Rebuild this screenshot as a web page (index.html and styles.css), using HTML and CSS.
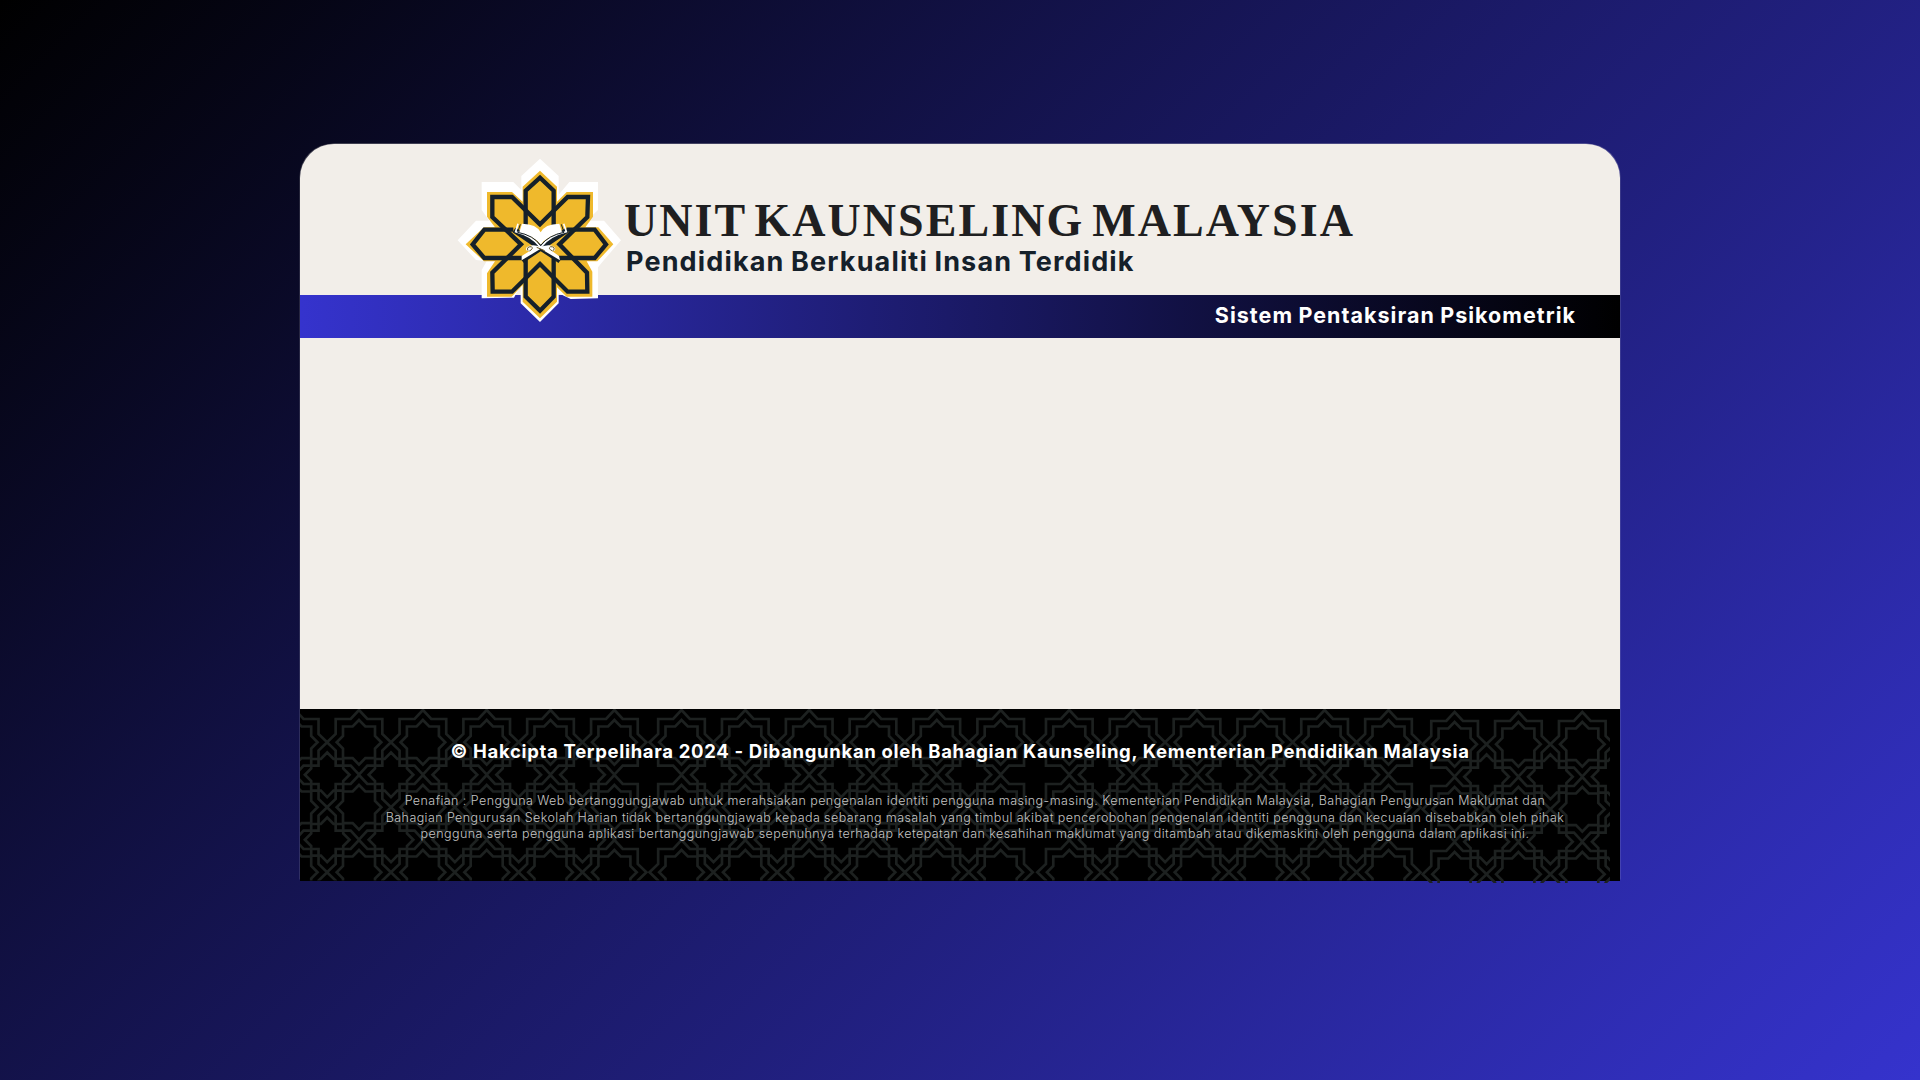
FILE: index.html
```html
<!DOCTYPE html>
<html lang="ms">
<head>
<meta charset="utf-8">
<title>Unit Kaunseling Malaysia</title>
<link rel="stylesheet" href="styles.css">
</head>
<body>
<main class="card">
  <header class="header">
    <svg class="logo" viewBox="0 0 600 540" aria-hidden="true">
      <path fill="#fff" d="M300 26 356 78V134L388 96H474V180L440 212H492L543 271 492 330 474 352V445L392 447 356 430V460L300 516 242 460V405L222 443 125 445V360L140 334 108 330 53 271 108 212H148L125 180V96H220L244 120V78Z"/>
      <path fill="#efb92c" d="M300 62 351 110V155L380 126H459V200L436 232H475L520 283 472 334H440L457 365V440H380L351 412V455L300 505 248 455V405L215 440H141V370L165 334H132L77 283 132 232H165L141 200V126H216L248 155V110Z"/>
      <path fill="#efb92c" d="M250 238H350V326H250Z"/>
      <g fill="none" stroke="#15202a" stroke-width="13">
        <path d="M257 240V122L300 83 341 122V240M257 325V440L300 482 341 440V325"/>
        <path d="M220 239H133L98 283 133 324H250M380 239H464L498 283 464 324H350"/>
        <path d="M300 223 216 141H157V201L243 283 157 368 158 425H216L300 342 383 425H442L441 368 358 283 442 201 444 141H383Z"/>
      </g>
      <path fill="none" stroke="#15202a" stroke-width="16" d="M222 240 302 294 382 240M302 294 246 332M302 294 360 332"/>
      <path fill="#fff" d="M246 221Q290 222 302 247 314 222 358 221L366 247Q322 258 302 284 282 258 238 247Z"/>
      <g fill="none" stroke="#fff" stroke-width="5">
        <path d="M234 221 227 245Q276 257 301 291M371 221 379 245Q328 257 303 291"/>
      </g>
      <path fill="none" stroke="#15202a" stroke-width="3" d="M241 223 233 247Q280 256 302 286 326 256 372 247L364 223"/>
      <path fill="#fff" d="M302 290Q274 280 260 292 254 304 268 304L245 318V331L302 296 360 331 357 318 337 304Q350 302 344 292 332 280 302 290Z"/>
      <path fill="none" stroke="#6b5620" stroke-width="3" d="M264 302Q258 290 274 290 282 296 268 303M340 302Q348 290 332 290 322 296 338 303M290 292 314 302"/>
    </svg>
    <div class="titles">
      <h1 class="title">UNIT KAUNSELING MALAYSIA</h1>
      <p class="subtitle">Pendidikan Berkualiti Insan Terdidik</p>
    </div>
  </header>
  <div class="bar">Sistem Pentaksiran Psikometrik</div>
  <section class="content"></section>
  <footer class="footer">
    <svg class="pattern" viewBox="300 709 1320 174" aria-hidden="true">
      <defs>
        <path id="inner" d="M0-67 19-47.500H48V-19L67 0 48 19V47.500H19L0 67-19 47.500H-48V19L-67 0-48-19V-47.500H-19Z"/>
        <g id="s" transform="scale(.3333)">
          <use href="#inner"/>
          <path d="M0-97 25-70H70V-25L96 0 70 25V70H25L0 97-25 70H-70V25L-96 0-70-25V-70H-25Z"/>
        </g>
        <g id="t" transform="scale(.3333)"><use href="#inner"/></g>
        <g id="scol"><use href="#s"/><use href="#s" y="65"/><use href="#s" y="130"/></g>
        <g id="tcol"><use href="#t" x="32" y="32.500"/><use href="#t" x="32" y="97.500"/></g>
        <g id="pair"><use href="#scol"/><use href="#tcol"/></g>
        <g id="group">
          <use href="#pair"/><use href="#pair" x="63.800"/><use href="#pair" x="127.700"/>
          <use href="#pair" x="191.500"/><use href="#pair" x="255.300"/><use href="#scol" x="319.200"/>
        </g>
        <clipPath id="left"><path d="M300 709H1422V880.500H300Z"/></clipPath>
        <clipPath id="right"><path d="M1421 709H1610V883H1421Z"/></clipPath>
      </defs>
      <g clip-path="url(#left)">
        <g class="lines">
          <use href="#group" x="295.200" y="742.300"/>
          <use href="#group" x="681.500" y="742.300"/>
          <use href="#group" x="1069.300" y="742.300"/>
        </g>
      </g>
      <g clip-path="url(#right)">
        <g class="lines">
          <use href="#pair" x="1454.600" y="744.300"/>
          <use href="#pair" x="1518.400" y="744.300"/>
          <use href="#pair" x="1582.300" y="744.300"/>
        </g>
      </g>
    </svg>
    <div class="legal">
      <p class="copyright">© Hakcipta Terpelihara 2024 - Dibangunkan oleh Bahagian Kaunseling, Kementerian Pendidikan Malaysia</p>
      <p class="disclaimer">
        <span class="line-one">Penafian : Pengguna Web bertanggungjawab untuk merahsiakan pengenalan identiti pengguna masing-masing. Kementerian Pendidikan Malaysia, Bahagian Pengurusan Maklumat dan</span>
        <span class="line-two">Bahagian Pengurusan Sekolah Harian tidak bertanggungjawab kepada sebarang masalah yang timbul akibat pencerobohan pengenalan identiti pengguna dan kecuaian disebabkan oleh pihak</span>
        <span class="line-three">pengguna serta pengguna aplikasi bertanggungjawab sepenuhnya terhadap ketepatan dan kesahihan maklumat yang ditambah atau dikemaskini oleh pengguna dalam aplikasi ini.</span>
      </p>
    </div>
  </footer>
</main>
</body>
</html>
```
FILE: styles.css
```css
* { box-sizing: border-box; }
body {
  margin: 0;
  height: 1080px;
  padding-top: 144px;
  overflow: hidden;
  background: linear-gradient(135deg, #000 0%, #3533cd 100%);
  font-family: Inter, "Open Sans", sans-serif;
}
h1, p { margin: 0; }
.card {
  width: 1320px;
  margin: 0 auto;
  border-radius: 34px 34px 0 0;
  background: #f2eee9;
  box-shadow: 1px -1px 0 -0.500px rgba(242, 238, 233, 0.250), -1px -1px 0 -0.500px rgba(242, 238, 233, 0.250);
}
.header {
  display: flex;
  height: 151px;
  padding: 6px 0 0 140px;
}
.logo {
  flex: none;
  width: 200px;
  height: 180px;
  z-index: 1;
}
.titles {
  padding-top: 41px;
  margin-left: -16px;
}
.title {
  font: bold 46px/60px "Liberation Serif", serif;
  letter-spacing: 2.050px;
  word-spacing: -5.500px;
  color: #1f1f21;
  white-space: nowrap;
}
.subtitle {
  margin: -5px 0 0 2px;
  font-size: 27px;
  line-height: 32px;
  letter-spacing: 1.150px;
  word-spacing: -1px;
  font-weight: 700;
  color: #15202a;
}
.bar {
  height: 43px;
  padding-right: 44px;
  background: linear-gradient(90deg, #3533cd, #000);
  color: #fff;
  font-size: 21.500px;
  line-height: 41px;
  letter-spacing: 1.030px;
  word-spacing: -0.750px;
  font-weight: 700;
  text-align: right;
}
.content { height: 371px; }
.footer {
  display: grid;
  height: 172px;
  background: #000;
}
.pattern, .legal { grid-area: 1 / 1; }
.pattern {
  width: 1320px;
  height: 174px;
}
.lines {
  fill: none;
  stroke: #1d2120;
  stroke-width: 8px;
}
.legal {
  z-index: 1;
  padding-top: 27px;
  text-align: center;
  white-space: nowrap;
}
.copyright {
  color: #fff;
  font-size: 18.500px;
  line-height: 30px;
  letter-spacing: 0.680px;
  font-weight: 700;
}
.disclaimer {
  display: flex;
  flex-direction: column;
  align-items: center;
  margin: 27px 0 0 30px;
  color: #c4c4c4;
  font-size: 12.500px;
  line-height: 16.600px;
  font-weight: 300;
}
.line-one { letter-spacing: 0.440px; }
.line-two { letter-spacing: 0.413px; }
.line-three { letter-spacing: 0.434px; }
```
